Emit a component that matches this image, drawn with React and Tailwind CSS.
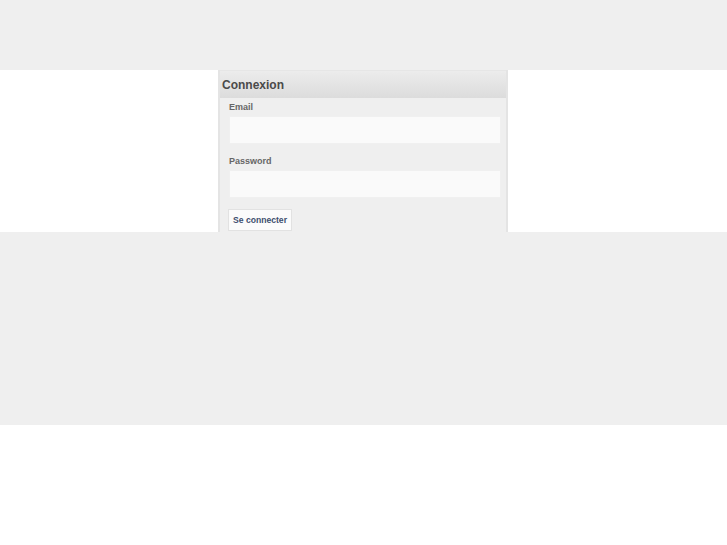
export default function App() {
  return (
    <div className="min-h-screen bg-white" style={{ fontFamily: '"Liberation Sans", Arial, sans-serif' }}>
      {/* Top band */}
      <div className="h-[70px] bg-[#efefef]"></div>

      {/* Login area */}
      <div className="h-[162px] overflow-hidden">
        <div className="w-[290px] ml-[218px] h-[180px] bg-[#efefef] border-x-2 border-[#e4e4e4]">
          <div className="h-[28px] px-[2px] flex items-center bg-gradient-to-b from-[#ececec] to-[#dcdcdc] border-t border-[#e6e6e6]">
            <h2 className="text-[12px] font-bold text-[#4a4a4a]">Connexion</h2>
          </div>
          <div className="pl-[9px] pt-[3px]">
            <label className="block text-[9px] font-bold text-[#666] leading-[13px]">Email</label>
            <div className="mt-[2px] w-[272px] h-[28px] bg-[#fafafa] border border-[#f0f0f0]"></div>
            <label className="block mt-[11px] text-[9px] font-bold text-[#666] leading-[13px]">Password</label>
            <div className="mt-[2px] w-[272px] h-[28px] bg-[#fafafa] border border-[#f0f0f0]"></div>
            <button className="mt-[11px] -ml-[1px] h-[22px] px-[4px] bg-[#fbfbfb] border border-[#e2e2e2] text-[8.6px] font-bold text-[#3d4e6e]">
              Se connecter
            </button>
          </div>
        </div>
      </div>

      {/* Bottom band */}
      <div className="h-[193px] bg-[#efefef]"></div>
    </div>
  );
}
